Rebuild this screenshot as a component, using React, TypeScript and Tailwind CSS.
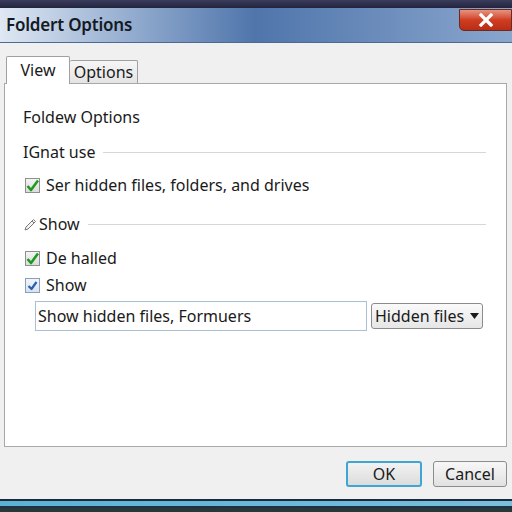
import React from "react";

const font = { fontFamily: '"Noto Sans", "Open Sans", sans-serif' };

function GreenCheck() {
  return (
    <span className="flex h-[15px] w-[15px] items-center justify-center border border-[#8f8f8f] bg-gradient-to-b from-[#f4f4f4] to-[#dcdcdc]">
      <svg width="13" height="13" viewBox="0 0 13 13">
        <path d="M1.5 7 L5 11 L12 1.5" fill="none" stroke="#1e9a1e" strokeWidth="2.6" strokeLinejoin="round" />
      </svg>
    </span>
  );
}

function BlueCheck() {
  return (
    <span className="flex h-[15px] w-[15px] items-center justify-center border border-[#8aa0ba] bg-gradient-to-b from-[#f2f6fb] to-[#d8e2ee]">
      <svg width="11" height="11" viewBox="0 0 11 11">
        <path d="M1.5 6 L4.5 9 L9.5 2" fill="none" stroke="#2c5fb0" strokeWidth="2.2" strokeLinejoin="round" />
      </svg>
    </span>
  );
}

function Pencil() {
  return (
    <svg width="15" height="15" viewBox="0 0 15 15">
      <path d="M2 13 L3 10 L10.5 2.5 L12.5 4.5 L5 12 Z" fill="#f4f4f4" stroke="#7a7a7a" strokeWidth="1" />
      <path d="M9 4 L11 6" stroke="#7a7a7a" strokeWidth="1" />
    </svg>
  );
}

export default function App() {
  return (
    <div className="flex h-[512px] w-[512px] flex-col overflow-hidden bg-[#f0f0f0] text-[#1a1a1a]" style={font}>
      {/* window frame top edge */}
      <div className="h-[8px] bg-gradient-to-b from-[#3a3c5c] to-[#23253f]" />

      {/* title bar */}
      <div className="relative flex h-[35px] items-center border-b border-[#4d6a94] bg-gradient-to-r from-[#dfe8f3] via-[#4f75ab] to-[#8aa6cd] pl-[6px]">
        <span className="text-[17px] font-semibold tracking-[-0.2px] text-[#141a24]">Foldert Options</span>
        <div className="absolute right-0 top-[1px] flex h-[22px] w-[53px] items-center justify-center rounded-bl-[5px] border border-[#6b2a20] bg-gradient-to-b from-[#e7927f] via-[#cf3d22] to-[#b92d16]">
          <svg width="16" height="14" viewBox="0 0 16 14">
            <path d="M3 2 L13 12 M13 2 L3 12" stroke="#ffffff" strokeWidth="3.2" strokeLinecap="square" />
          </svg>
        </div>
      </div>

      <div className="flex flex-1 flex-col px-[4px] pt-[13px]">
        {/* tabs */}
        <div className="flex items-end pl-[2px]">
          <div className="z-10 -mb-px flex h-[28px] w-[64px] items-center justify-center rounded-t-[2px] border border-b-0 border-[#a0a0a0] bg-white pb-[2px] text-[16px]">
            View
          </div>
          <div className="flex h-[23px] w-[68px] items-center justify-center rounded-t-[2px] border border-l-0 border-b-0 border-[#a0a0a0] bg-gradient-to-b from-[#f6f6f6] to-[#e4e4e4] text-[16px]">
            Options
          </div>
        </div>

        {/* tab page */}
        <div className="flex h-[364px] w-[503px] flex-col border border-[#a8a8a8] bg-white pl-[18px] pr-[20px] pt-[21px] text-[16px]">
          <div className="h-[24px] leading-[24px]">Foldew Options</div>

          <div className="mt-[11px] flex h-[24px] items-center gap-[8px]">
            <span>IGnat use</span>
            <div className="h-px flex-1 bg-[#d6d6d6]" />
          </div>

          <div className="mt-[9px] flex h-[24px] items-center gap-[6px] pl-[2px]">
            <GreenCheck />
            <span>Ser hidden files, folders, and drives</span>
          </div>

          <div className="mt-[15px] flex h-[24px] items-center gap-[8px]">
            <span className="flex items-center gap-[1px]">
              <Pencil />
              <span>Show</span>
            </span>
            <div className="h-px flex-1 bg-[#d6d6d6]" />
          </div>

          <div className="mt-[10px] flex h-[24px] items-center gap-[6px] pl-[2px]">
            <GreenCheck />
            <span>De halled</span>
          </div>

          <div className="mt-[3px] flex h-[24px] items-center gap-[6px] pl-[2px]">
            <BlueCheck />
            <span>Show</span>
          </div>

          <div className="mt-[4px] flex items-center gap-[4px] pl-[12px]">
            <div className="flex h-[30px] w-[332px] items-center border border-[#a9c0d4] bg-white pl-[2px]">
              Show hidden files, Formuers
            </div>
            <div className="flex h-[26px] items-center gap-[6px] rounded-[3px] border border-[#8c8c8c] bg-gradient-to-b from-[#fafafa] to-[#e6e6e6] px-[3px]">
              <span>Hidden files</span>
              <svg width="9" height="6" viewBox="0 0 9 6">
                <path d="M0 0 H9 L4.5 6 Z" fill="#1a1a1a" />
              </svg>
            </div>
          </div>
        </div>

        {/* dialog buttons */}
        <div className="mt-[14px] flex justify-end gap-[11px] pr-[1px]">
          <button className="flex h-[26px] w-[76px] items-center justify-center rounded-[3px] border-2 border-[#3fa6d4] bg-gradient-to-b from-[#f2f2f2] to-[#dcdcdc] text-[16px]">
            OK
          </button>
          <button className="flex h-[26px] w-[74px] items-center justify-center rounded-[3px] border border-[#8c8c8c] bg-gradient-to-b from-[#f7f7f7] to-[#e1e1e1] text-[16px]">
            Cancel
          </button>
        </div>
      </div>

      {/* taskbar edge */}
      <div className="flex h-[13px] flex-col">
        <div className="h-[2px] bg-[#1c2a40]" />
        <div className="h-[5px] bg-gradient-to-r from-[#5ab2d3] to-[#78bfdc]" />
        <div className="h-[2px] bg-[#203048]" />
        <div className="flex-1 bg-[#263838]" />
      </div>
    </div>
  );
}
